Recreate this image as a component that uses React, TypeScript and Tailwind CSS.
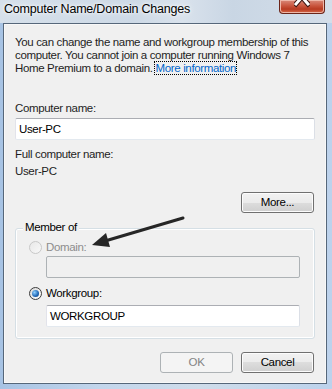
function Radio({ checked, disabled }: { checked?: boolean; disabled?: boolean }) {
  if (disabled) {
    return <div className="h-[13px] w-[13px] rounded-full border border-[#c8c8c8] bg-gradient-to-br from-[#e8e8e8] to-[#f8f8f8]" />;
  }
  return (
    <div className="flex h-[13px] w-[13px] items-center justify-center rounded-full border border-[#3c3c3c] bg-gradient-to-br from-[#d8d8d8] to-[#ffffff]">
      <div className="h-[7px] w-[7px] rounded-full bg-[radial-gradient(circle_at_35%_35%,#8fd0ff,#1e66b4_60%,#0d3d7a)]" />
    </div>
  );
}

function Button({ label, disabled }: { label: string; disabled?: boolean }) {
  if (disabled) {
    return (
      <div className="flex h-[21px] w-[73px] items-center justify-center rounded-[3px] border border-[#adb2b5] bg-[#f4f4f4] text-[#838383]">
        {label}
      </div>
    );
  }
  return (
    <div className="flex h-[21px] w-[73px] items-center justify-center rounded-[3px] border border-[#707070] bg-[linear-gradient(#f2f2f2,#ebebeb_50%,#dddddd_50%,#cfcfcf)] text-black shadow-[inset_0_0_0_1px_#fcfcfc]">
      {label}
    </div>
  );
}

export default function App() {
  return (
    <div
      className="h-[389px] w-[332px] overflow-hidden bg-[linear-gradient(90deg,#a7c3e4,#c3d6ec_30%,#cfdcea_60%,#bcd2ec)] text-[11.5px] leading-[13px] tracking-[-0.35px] text-[#1e1e1e]"
      style={{ fontFamily: '"Liberation Sans", Arial, sans-serif' }}
    >
      {/* title bar */}
      <div className="flex h-[23px] items-start justify-between bg-[linear-gradient(90deg,#d6e0ea,#cdd9e6_40%,#d9e2ec_55%,#c9d6e4_70%,#d4dee9)]">
        <div className="pl-[4px] pt-[2px] text-[12.5px] leading-[15px] tracking-[-0.2px] text-black [text-shadow:0_0_6px_#ffffff,0_0_3px_#ffffff]">
          Computer Name/Domain Changes
        </div>
        <div className="mr-[7px] flex h-[14px] w-[46px] items-end justify-center overflow-hidden rounded-b-[4px] border border-t-0 border-[#6b2519] bg-[linear-gradient(#d98a7a,#c9553d_45%,#b83b22_70%,#d66a4a)] shadow-[inset_0_0_0_1px_#eeb7a8]">
          <svg width="16" height="14" viewBox="0 0 16 14" className="mb-[3px]">
            <path d="M2 -6 L14 8 M14 -6 L2 8" stroke="#3b1510" strokeWidth="5" strokeLinecap="square" />
            <path d="M2 -6 L14 8 M14 -6 L2 8" stroke="#ffffff" strokeWidth="3" strokeLinecap="square" />
          </svg>
        </div>
      </div>

      {/* client area */}
      <div className="ml-[3px] mr-[5px] h-[361px] border border-[#56677a] bg-[#f0f0f0] shadow-[inset_0_0_0_1px_#ffffff80]">
        <div className="relative px-[11px] pt-[12px]">
          <p className="whitespace-nowrap">
            You can change the name and workgroup membership of this
            <br />
            computer. You cannot join a computer running Windows 7
            <br />
            Home Premium to a domain.{' '}
            <span className="text-[#0066cc] outline-1 outline-dotted outline-black">More information</span>
          </p>

          <div className="mt-[27px]">Computer name:</div>
          <div className="mt-[3px] flex h-[22px] w-[300px] items-center rounded-[2px] border border-[#abadb3] border-b-[#e3e9ef] border-l-[#e2e3ea] border-r-[#dbdfe6] bg-white pl-[3px] text-black">
            User-PC
          </div>

          <div className="mt-[8px]">Full computer name:</div>
          <div className="mt-[4px]">User-PC</div>

          <div className="mt-[14px] flex justify-end pr-[1px]">
            <div className="h-[20px]">
              <Button label="More..." />
            </div>
          </div>

          {/* group box */}
          <div className="relative mt-[16px] h-[111px] w-[300px] rounded-[3px] border border-[#d5dfe5] shadow-[inset_0_0_0_1px_#ffffff]">
            <span className="absolute left-[7px] top-[-8px] bg-[#f0f0f0] px-[2px] text-black">Member of</span>
            <div className="pl-[13px] pt-[12px]">
              <div className="flex items-center gap-[4px]">
                <Radio disabled />
                <span className="text-[#8d8d8d]">Domain:</span>
              </div>
              <div className="ml-[17px] mt-[2px] h-[22px] w-[254px] rounded-[2px] border border-[#adb2b5] bg-[#f0f0f0]" />
              <div className="mt-[9px] flex items-center gap-[4px]">
                <Radio checked />
                <span className="text-black">Workgroup:</span>
              </div>
              <div className="ml-[17px] mt-[5px] flex h-[22px] w-[254px] items-center rounded-[2px] border border-[#abadb3] border-b-[#e3e9ef] border-l-[#e2e3ea] border-r-[#dbdfe6] bg-white pl-[3px] text-black">
                WORKGROUP
              </div>
            </div>
          </div>

          <div className="mt-[13px] flex justify-end gap-[8px] pr-[1px]">
            <Button label="OK" disabled />
            <Button label="Cancel" />
          </div>

          {/* annotation arrow */}
          <svg className="pointer-events-none absolute left-0 top-0" width="320" height="300" viewBox="0 0 320 300">
            <line x1="179" y1="194" x2="101" y2="217" stroke="#262626" strokeWidth="3" strokeLinecap="round" />
            <polygon points="88,221 102,209 106,223" fill="#262626" />
          </svg>
        </div>
      </div>
    </div>
  );
}
